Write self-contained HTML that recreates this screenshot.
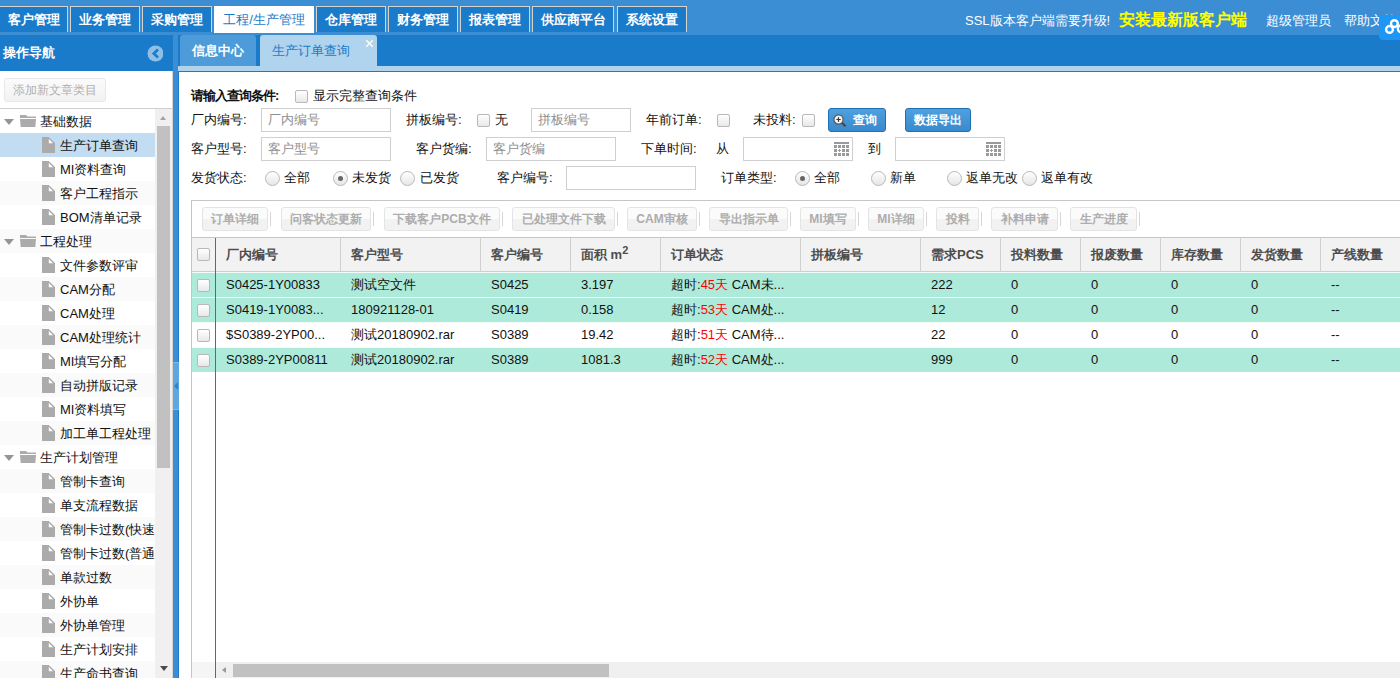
<!DOCTYPE html>
<html><head><meta charset="utf-8">
<style>
*{box-sizing:border-box;}
html,body{margin:0;padding:0;}
body{width:1400px;height:678px;overflow:hidden;position:relative;background:#fff;font-family:"Liberation Sans",sans-serif;font-size:13px;color:#111;}
.a{position:absolute;}
.t{position:absolute;white-space:nowrap;line-height:16px;}
/* header */
#hdr{left:0;top:0;width:1400px;height:35px;background:#3b8ed3;}
.mt{position:absolute;top:6px;height:26px;border:1px solid #d6d2cc;border-bottom:none;background:#1a7bca;color:#fff;font-weight:bold;font-size:13px;line-height:26px;text-align:center;white-space:nowrap;}
.mt.on{background:#fff;color:#1a7bca;font-weight:normal;height:27px;border-color:#fff;}
/* sidebar */
#side{left:0;top:35px;width:173px;height:643px;background:#fff;}
#sh{left:0;top:0;width:173px;height:36px;background:#1a7bca;}
.tr{position:absolute;left:0;width:155px;height:24px;line-height:24px;white-space:nowrap;overflow:hidden;color:#111;}
.tr.g{background:#fafafa;}
.tr.sel{background:#c2dcf2;}
.fi{position:absolute;left:42px;top:4px;width:13px;height:16px;}
.fo{position:absolute;left:20px;top:6px;width:16px;height:12px;}
.ar{position:absolute;left:3.5px;top:10px;width:0;height:0;border-left:5px solid transparent;border-right:5px solid transparent;border-top:6.5px solid #959595;}
/* content */
.cb{position:absolute;width:13px;height:13px;border:1px solid #b8b8b8;border-radius:2px;background:linear-gradient(#fff,#e8e8e8);}
.rd{position:absolute;width:15px;height:15px;border:1px solid #b8b8b8;border-radius:50%;background:linear-gradient(#fff,#e6e6e6);}
.rd.on::after{content:"";position:absolute;left:4px;top:4px;width:5px;height:5px;border-radius:50%;background:#666;}
.in{position:absolute;height:24px;border:1px solid #cfcfcf;background:#fff;color:#8e8e8e;line-height:22px;padding-left:6px;white-space:nowrap;}
.tb{position:absolute;top:207px;height:24px;border:1px solid #e4e4e4;border-radius:3px;background:linear-gradient(#fbfbfb 50%,#f2f2f2 50%);color:#adadad;font-weight:bold;font-size:12px;line-height:22px;text-align:center;white-space:nowrap;}
.sp{position:absolute;top:212px;width:1px;height:14px;background:#d6d6d6;}
.hc{position:absolute;top:238px;height:33px;line-height:33px;font-weight:bold;color:#4d4d4d;white-space:nowrap;}
.cs{position:absolute;top:238px;width:1px;height:33px;background:#cfcfcf;}
.row{position:absolute;left:192px;width:1208px;height:25px;box-shadow:inset 0 1px 0 #f2fbf8;}
.row.m{background:#aeeada;}
.c{position:absolute;top:0;line-height:25px;white-space:nowrap;color:#111;}
</style></head>
<body>
<!-- HEADER -->
<div id="hdr" class="a">
  <div class="mt" style="left:-1px;width:69px;">客户管理</div>
  <div class="mt" style="left:70px;width:70px;">业务管理</div>
  <div class="mt" style="left:142px;width:70px;">采购管理</div>
  <div class="mt on" style="left:214px;width:100px;">工程/生产管理</div>
  <div class="mt" style="left:316px;width:70px;">仓库管理</div>
  <div class="mt" style="left:388px;width:70px;">财务管理</div>
  <div class="mt" style="left:460px;width:70px;">报表管理</div>
  <div class="mt" style="left:532px;width:82px;">供应商平台</div>
  <div class="mt" style="left:617px;width:70px;">系统设置</div>
  <div class="t" style="left:965px;top:13px;color:#fff;">SSL版本客户端需要升级!</div>
  <div class="t" style="left:1119px;top:11px;color:#ffff00;font-weight:bold;font-size:16px;line-height:18px;">安装最新版客户端</div>
  <div class="t" style="left:1266px;top:13px;color:#fff;">超级管理员</div>
  <div class="t" style="left:1344px;top:13px;color:#fff;">帮助文档</div>
  <div class="a" style="left:1379px;top:15px;width:30px;height:25px;border-radius:4px;background:#1e96f5;z-index:5;"><svg width="30" height="25" viewBox="0 0 30 25"><circle cx="10.5" cy="14.4" r="3.4" fill="none" stroke="#fff" stroke-width="2.4"/><circle cx="15.4" cy="8.6" r="3.4" fill="none" stroke="#fff" stroke-width="2.4"/><circle cx="22.2" cy="13.8" r="3.4" fill="none" stroke="#fff" stroke-width="2.4"/></svg></div>
</div>

<!-- SIDEBAR -->
<div id="side" class="a">
  <div id="sh" class="a">
    <div class="t" style="left:3px;top:10px;color:#fff;font-weight:bold;">操作导航</div>
    <svg class="a" style="left:147px;top:9.5px;" width="17" height="17" viewBox="0 0 17 17"><clipPath id="cp"><rect x="0" y="0" width="16" height="17"/></clipPath><circle cx="8.5" cy="8.5" r="8" fill="#8ebfe7" clip-path="url(#cp)"/><path d="M11 4.5L6.8 8.5L11 12.5" fill="none" stroke="#1a7bca" stroke-width="2.6"/></svg>
  </div>
  <div class="a" style="left:4px;top:43px;width:102px;height:24px;border:1px solid #e8e8e8;border-radius:3px;background:linear-gradient(#fbfbfb,#f2f2f2);color:#b0b0b0;font-size:12px;line-height:22px;text-align:center;">添加新文章类目</div>
  <div class="a" style="left:0;top:73px;width:173px;height:1px;background:#cfcfcf;"></div>
  <div id="tree" class="a" style="left:0;top:74px;width:155px;height:569px;overflow:hidden;"><div class="tr" style="top:0px;"><div class="ar"></div><svg class="fo" viewBox="0 0 16 12"><path d="M0 0H6L7.5 1.5H16V3H0Z" fill="#ababab"/><path d="M0 4H16L15.3 12H0.7Z" fill="#ababab"/></svg><span class="t" style="left:40px;top:5px;">基础数据</span></div>
<div class="tr sel" style="top:24px;"><svg class="fi" viewBox="0 0 13 16"><path d="M0 0H6.7L13 6V16H0Z" fill="#ababab"/><path d="M6.8 1.8V6.2H11Z" fill="#fff"/></svg><span class="t" style="left:60px;top:5px;">生产订单查询</span></div>
<div class="tr" style="top:48px;"><svg class="fi" viewBox="0 0 13 16"><path d="M0 0H6.7L13 6V16H0Z" fill="#ababab"/><path d="M6.8 1.8V6.2H11Z" fill="#fff"/></svg><span class="t" style="left:60px;top:5px;">MI资料查询</span></div>
<div class="tr g" style="top:72px;"><svg class="fi" viewBox="0 0 13 16"><path d="M0 0H6.7L13 6V16H0Z" fill="#ababab"/><path d="M6.8 1.8V6.2H11Z" fill="#fff"/></svg><span class="t" style="left:60px;top:5px;">客户工程指示</span></div>
<div class="tr" style="top:96px;"><svg class="fi" viewBox="0 0 13 16"><path d="M0 0H6.7L13 6V16H0Z" fill="#ababab"/><path d="M6.8 1.8V6.2H11Z" fill="#fff"/></svg><span class="t" style="left:60px;top:5px;">BOM清单记录</span></div>
<div class="tr g" style="top:120px;"><div class="ar"></div><svg class="fo" viewBox="0 0 16 12"><path d="M0 0H6L7.5 1.5H16V3H0Z" fill="#ababab"/><path d="M0 4H16L15.3 12H0.7Z" fill="#ababab"/></svg><span class="t" style="left:40px;top:5px;">工程处理</span></div>
<div class="tr" style="top:144px;"><svg class="fi" viewBox="0 0 13 16"><path d="M0 0H6.7L13 6V16H0Z" fill="#ababab"/><path d="M6.8 1.8V6.2H11Z" fill="#fff"/></svg><span class="t" style="left:60px;top:5px;">文件参数评审</span></div>
<div class="tr g" style="top:168px;"><svg class="fi" viewBox="0 0 13 16"><path d="M0 0H6.7L13 6V16H0Z" fill="#ababab"/><path d="M6.8 1.8V6.2H11Z" fill="#fff"/></svg><span class="t" style="left:60px;top:5px;">CAM分配</span></div>
<div class="tr" style="top:192px;"><svg class="fi" viewBox="0 0 13 16"><path d="M0 0H6.7L13 6V16H0Z" fill="#ababab"/><path d="M6.8 1.8V6.2H11Z" fill="#fff"/></svg><span class="t" style="left:60px;top:5px;">CAM处理</span></div>
<div class="tr g" style="top:216px;"><svg class="fi" viewBox="0 0 13 16"><path d="M0 0H6.7L13 6V16H0Z" fill="#ababab"/><path d="M6.8 1.8V6.2H11Z" fill="#fff"/></svg><span class="t" style="left:60px;top:5px;">CAM处理统计</span></div>
<div class="tr" style="top:240px;"><svg class="fi" viewBox="0 0 13 16"><path d="M0 0H6.7L13 6V16H0Z" fill="#ababab"/><path d="M6.8 1.8V6.2H11Z" fill="#fff"/></svg><span class="t" style="left:60px;top:5px;">MI填写分配</span></div>
<div class="tr g" style="top:264px;"><svg class="fi" viewBox="0 0 13 16"><path d="M0 0H6.7L13 6V16H0Z" fill="#ababab"/><path d="M6.8 1.8V6.2H11Z" fill="#fff"/></svg><span class="t" style="left:60px;top:5px;">自动拼版记录</span></div>
<div class="tr" style="top:288px;"><svg class="fi" viewBox="0 0 13 16"><path d="M0 0H6.7L13 6V16H0Z" fill="#ababab"/><path d="M6.8 1.8V6.2H11Z" fill="#fff"/></svg><span class="t" style="left:60px;top:5px;">MI资料填写</span></div>
<div class="tr g" style="top:312px;"><svg class="fi" viewBox="0 0 13 16"><path d="M0 0H6.7L13 6V16H0Z" fill="#ababab"/><path d="M6.8 1.8V6.2H11Z" fill="#fff"/></svg><span class="t" style="left:60px;top:5px;">加工单工程处理</span></div>
<div class="tr" style="top:336px;"><div class="ar"></div><svg class="fo" viewBox="0 0 16 12"><path d="M0 0H6L7.5 1.5H16V3H0Z" fill="#ababab"/><path d="M0 4H16L15.3 12H0.7Z" fill="#ababab"/></svg><span class="t" style="left:40px;top:5px;">生产计划管理</span></div>
<div class="tr g" style="top:360px;"><svg class="fi" viewBox="0 0 13 16"><path d="M0 0H6.7L13 6V16H0Z" fill="#ababab"/><path d="M6.8 1.8V6.2H11Z" fill="#fff"/></svg><span class="t" style="left:60px;top:5px;">管制卡查询</span></div>
<div class="tr" style="top:384px;"><svg class="fi" viewBox="0 0 13 16"><path d="M0 0H6.7L13 6V16H0Z" fill="#ababab"/><path d="M6.8 1.8V6.2H11Z" fill="#fff"/></svg><span class="t" style="left:60px;top:5px;">单支流程数据</span></div>
<div class="tr g" style="top:408px;"><svg class="fi" viewBox="0 0 13 16"><path d="M0 0H6.7L13 6V16H0Z" fill="#ababab"/><path d="M6.8 1.8V6.2H11Z" fill="#fff"/></svg><span class="t" style="left:60px;top:5px;">管制卡过数(快速</span></div>
<div class="tr" style="top:432px;"><svg class="fi" viewBox="0 0 13 16"><path d="M0 0H6.7L13 6V16H0Z" fill="#ababab"/><path d="M6.8 1.8V6.2H11Z" fill="#fff"/></svg><span class="t" style="left:60px;top:5px;">管制卡过数(普通</span></div>
<div class="tr g" style="top:456px;"><svg class="fi" viewBox="0 0 13 16"><path d="M0 0H6.7L13 6V16H0Z" fill="#ababab"/><path d="M6.8 1.8V6.2H11Z" fill="#fff"/></svg><span class="t" style="left:60px;top:5px;">单款过数</span></div>
<div class="tr" style="top:480px;"><svg class="fi" viewBox="0 0 13 16"><path d="M0 0H6.7L13 6V16H0Z" fill="#ababab"/><path d="M6.8 1.8V6.2H11Z" fill="#fff"/></svg><span class="t" style="left:60px;top:5px;">外协单</span></div>
<div class="tr g" style="top:504px;"><svg class="fi" viewBox="0 0 13 16"><path d="M0 0H6.7L13 6V16H0Z" fill="#ababab"/><path d="M6.8 1.8V6.2H11Z" fill="#fff"/></svg><span class="t" style="left:60px;top:5px;">外协单管理</span></div>
<div class="tr" style="top:528px;"><svg class="fi" viewBox="0 0 13 16"><path d="M0 0H6.7L13 6V16H0Z" fill="#ababab"/><path d="M6.8 1.8V6.2H11Z" fill="#fff"/></svg><span class="t" style="left:60px;top:5px;">生产计划安排</span></div>
<div class="tr g" style="top:552px;"><svg class="fi" viewBox="0 0 13 16"><path d="M0 0H6.7L13 6V16H0Z" fill="#ababab"/><path d="M6.8 1.8V6.2H11Z" fill="#fff"/></svg><span class="t" style="left:60px;top:5px;">生产命书查询</span></div></div>
  <div class="a" style="left:155px;top:74px;width:17px;height:569px;background:#f0f0f0;"></div>
  <div class="a" style="left:157px;top:91px;width:13px;height:342px;background:#c1c1c1;"></div><div class="a" style="left:160px;top:81px;width:0;height:0;border-left:3.5px solid transparent;border-right:3.5px solid transparent;border-bottom:4px solid #a3a3a3;"></div><div class="a" style="left:159.5px;top:631px;width:0;height:0;border-left:4px solid transparent;border-right:4px solid transparent;border-top:5px solid #4a4a4a;"></div>
  <div class="a" style="left:172px;top:36px;width:1px;height:607px;background:#d8d4cf;"></div>
</div>

<!-- SPLITTER -->
<div class="a" style="left:173px;top:35px;width:5px;height:643px;background:#3b8ed3;"></div>
<div class="a" style="left:173px;top:362px;width:6px;height:48px;background:#5ea6e0;border-top:1px solid #7db8e8;border-bottom:1px solid #7db8e8;z-index:3;"><div class="a" style="left:1px;top:19px;width:0;height:0;border-top:4px solid transparent;border-bottom:4px solid transparent;border-right:4px solid #2a85cf;"></div></div>

<!-- RIGHT PANEL -->
<div class="a" style="left:178px;top:35px;width:1222px;height:37px;background:#1a7bca;"></div>
<div class="a" style="left:178px;top:72px;width:1px;height:606px;background:#1a7bca;"></div>
<div class="a" style="left:180px;top:35px;width:76px;height:31px;background:#4d9bd8;border-radius:3px 3px 0 0;"></div>
<div class="t" style="left:192px;top:43px;color:#fff;font-weight:bold;">信息中心</div>
<div class="a" style="left:260px;top:35px;width:117px;height:31px;background:#b0d3ee;border-radius:3px 3px 0 0;"></div>
<div class="a" style="left:178px;top:66px;width:1222px;height:5px;background:#b0d3ee;"></div>
<div class="t" style="left:272px;top:43px;color:#1a7bca;">生产订单查询</div>
<svg class="a" style="left:365px;top:39px;" width="9" height="9" viewBox="0 0 9 9"><path d="M1.2 1.2L7.8 7.8M7.8 1.2L1.2 7.8" stroke="#fff" stroke-width="1.3"/></svg>

<!-- FORM -->
<div class="t" style="left:191px;top:88px;font-weight:bold;letter-spacing:-1px;">请输入查询条件:</div>
<div class="cb" style="left:295px;top:90px;"></div>
<div class="t" style="left:313px;top:88px;">显示完整查询条件</div>
<div class="t" style="left:191px;top:112px;">厂内编号:</div>
<div class="in" style="left:261px;top:108px;width:130px;">厂内编号</div>
<div class="t" style="left:406px;top:112px;">拼板编号:</div>
<div class="cb" style="left:477px;top:114px;"></div>
<div class="t" style="left:495px;top:112px;">无</div>
<div class="in" style="left:531px;top:108px;width:100px;">拼板编号</div>
<div class="t" style="left:646px;top:112px;">年前订单:</div>
<div class="cb" style="left:717px;top:114px;"></div>
<div class="t" style="left:753px;top:112px;">未投料:</div>
<div class="cb" style="left:802px;top:114px;"></div>
<div class="a" style="left:828px;top:108px;width:58px;height:24px;border:1px solid #2170b3;border-radius:3px;background:linear-gradient(#4fa0dd,#378ace);"></div>
<svg class="a" style="left:833px;top:114px;" width="15" height="13" viewBox="0 0 15 13"><circle cx="5.5" cy="5.5" r="4.6" fill="#f4f4f4" stroke="#555" stroke-width="1.2"/><path d="M3.3 5.5H7.7M5.5 3.3V7.7" stroke="#333" stroke-width="1.2"/><path d="M8.8 8.8L12.5 12.3" stroke="#444" stroke-width="2"/></svg>
<div class="t" style="left:853px;top:112px;color:#fff;font-weight:bold;font-size:12px;">查询</div>
<div class="a" style="left:905px;top:108px;width:66px;height:24px;border:1px solid #2170b3;border-radius:3px;background:linear-gradient(#4fa0dd,#378ace);"></div>
<div class="t" style="left:914px;top:112px;color:#fff;font-weight:bold;font-size:12px;">数据导出</div>
<div class="t" style="left:191px;top:141px;">客户型号:</div>
<div class="in" style="left:261px;top:137px;width:130px;">客户型号</div>
<div class="t" style="left:416px;top:141px;">客户货编:</div>
<div class="in" style="left:486px;top:137px;width:130px;">客户货编</div>
<div class="t" style="left:641px;top:141px;">下单时间:</div>
<div class="t" style="left:716px;top:141px;">从</div>
<div class="in" style="left:743px;top:137px;width:110px;"></div>
<svg class="a" style="left:834px;top:142px;" width="15" height="14" viewBox="0 0 15 14"><rect x="0" y="0" width="15" height="2" fill="#9a9a9a"/><rect x="0" y="3" width="3" height="3" fill="#9a9a9a"/><rect x="4" y="3" width="3" height="3" fill="#9a9a9a"/><rect x="8" y="3" width="3" height="3" fill="#9a9a9a"/><rect x="12" y="3" width="3" height="3" fill="#9a9a9a"/><rect x="0" y="7" width="3" height="3" fill="#9a9a9a"/><rect x="8" y="7" width="3" height="3" fill="#9a9a9a"/><rect x="12" y="7" width="3" height="3" fill="#9a9a9a"/><rect x="0" y="11" width="3" height="3" fill="#9a9a9a"/><rect x="4" y="11" width="3" height="3" fill="#9a9a9a"/><rect x="8" y="11" width="3" height="3" fill="#9a9a9a"/><rect x="12" y="11" width="3" height="3" fill="#9a9a9a"/><path d="M4 8.5H7M5.5 7V10" stroke="#9a9a9a" stroke-width="1"/></svg>
<div class="t" style="left:868px;top:141px;">到</div>
<div class="in" style="left:895px;top:137px;width:110px;"></div>
<svg class="a" style="left:986px;top:142px;" width="15" height="14" viewBox="0 0 15 14"><rect x="0" y="0" width="15" height="2" fill="#9a9a9a"/><rect x="0" y="3" width="3" height="3" fill="#9a9a9a"/><rect x="4" y="3" width="3" height="3" fill="#9a9a9a"/><rect x="8" y="3" width="3" height="3" fill="#9a9a9a"/><rect x="12" y="3" width="3" height="3" fill="#9a9a9a"/><rect x="0" y="7" width="3" height="3" fill="#9a9a9a"/><rect x="8" y="7" width="3" height="3" fill="#9a9a9a"/><rect x="12" y="7" width="3" height="3" fill="#9a9a9a"/><rect x="0" y="11" width="3" height="3" fill="#9a9a9a"/><rect x="4" y="11" width="3" height="3" fill="#9a9a9a"/><rect x="8" y="11" width="3" height="3" fill="#9a9a9a"/><rect x="12" y="11" width="3" height="3" fill="#9a9a9a"/><path d="M4 8.5H7M5.5 7V10" stroke="#9a9a9a" stroke-width="1"/></svg>
<div class="t" style="left:191px;top:170px;">发货状态:</div>
<div class="rd" style="left:265px;top:171px;"></div>
<div class="t" style="left:284px;top:170px;">全部</div>
<div class="rd on" style="left:333px;top:171px;"></div>
<div class="t" style="left:352px;top:170px;">未发货</div>
<div class="rd" style="left:400px;top:171px;"></div>
<div class="t" style="left:420px;top:170px;">已发货</div>
<div class="t" style="left:497px;top:170px;">客户编号:</div>
<div class="in" style="left:566px;top:166px;width:130px;"></div>
<div class="t" style="left:721px;top:170px;">订单类型:</div>
<div class="rd on" style="left:795px;top:171px;"></div>
<div class="t" style="left:814px;top:170px;">全部</div>
<div class="rd" style="left:871px;top:171px;"></div>
<div class="t" style="left:890px;top:170px;">新单</div>
<div class="rd" style="left:947px;top:171px;"></div>
<div class="t" style="left:966px;top:170px;">返单无改</div>
<div class="rd" style="left:1022px;top:171px;"></div>
<div class="t" style="left:1041px;top:170px;">返单有改</div>

<!-- GRID -->
<div class="a" style="left:191px;top:200px;width:1209px;height:478px;border-left:1px solid #c6c6c6;border-top:1px solid #c6c6c6;background:#fff;"></div>
<div class="a" style="left:192px;top:237px;width:1208px;height:1px;background:#c6c6c6;"></div>
<div class="tb" style="left:202px;width:66px;">订单详细</div>
<div class="sp" style="left:270px;"></div>
<div class="tb" style="left:281px;width:90px;">问客状态更新</div>
<div class="sp" style="left:373px;"></div>
<div class="tb" style="left:384px;width:116px;">下载客户PCB文件</div>
<div class="sp" style="left:502px;"></div>
<div class="tb" style="left:512px;width:103px;">已处理文件下载</div>
<div class="sp" style="left:617px;"></div>
<div class="tb" style="left:627px;width:70px;">CAM审核</div>
<div class="sp" style="left:699px;"></div>
<div class="tb" style="left:709px;width:79px;">导出指示单</div>
<div class="sp" style="left:790px;"></div>
<div class="tb" style="left:800px;width:56px;">MI填写</div>
<div class="sp" style="left:858px;"></div>
<div class="tb" style="left:868px;width:56px;">MI详细</div>
<div class="sp" style="left:926px;"></div>
<div class="tb" style="left:936px;width:43px;">投料</div>
<div class="sp" style="left:981px;"></div>
<div class="tb" style="left:991px;width:67px;">补料申请</div>
<div class="sp" style="left:1060px;"></div>
<div class="tb" style="left:1070px;width:67px;">生产进度</div>
<div class="sp" style="left:1139px;"></div>
<div class="a" style="left:192px;top:238px;width:1208px;height:33px;background:#f2f2f2;"></div>
<div class="a" style="left:192px;top:271px;width:1208px;height:1px;background:#cfcfcf;"></div>
<div class="cb" style="left:197px;top:248px;"></div>
<div class="hc" style="left:226px;">厂内编号</div>
<div class="cs" style="left:340px;"></div>
<div class="hc" style="left:351px;">客户型号</div>
<div class="cs" style="left:480px;"></div>
<div class="hc" style="left:491px;">客户编号</div>
<div class="cs" style="left:570px;"></div>
<div class="hc" style="left:581px;">面积 m<sup style="font-size:11px;line-height:0;">2</sup></div>
<div class="cs" style="left:660px;"></div>
<div class="hc" style="left:671px;">订单状态</div>
<div class="cs" style="left:800px;"></div>
<div class="hc" style="left:811px;">拼板编号</div>
<div class="cs" style="left:920px;"></div>
<div class="hc" style="left:931px;">需求PCS</div>
<div class="cs" style="left:1000px;"></div>
<div class="hc" style="left:1011px;">投料数量</div>
<div class="cs" style="left:1080px;"></div>
<div class="hc" style="left:1091px;">报废数量</div>
<div class="cs" style="left:1160px;"></div>
<div class="hc" style="left:1171px;">库存数量</div>
<div class="cs" style="left:1240px;"></div>
<div class="hc" style="left:1251px;">发货数量</div>
<div class="cs" style="left:1320px;"></div>
<div class="hc" style="left:1331px;">产线数量</div>
<div class="row m" style="top:272px;"><div class="cb" style="left:5px;top:7px;"></div><div class="c" style="left:34px;">S0425-1Y00833</div><div class="c" style="left:159px;">测试空文件</div><div class="c" style="left:299px;">S0425</div><div class="c" style="left:389px;">3.197</div><div class="c" style="left:479px;">超时:<span style="color:#f00">45天</span> CAM未...</div><div class="c" style="left:619px;"></div><div class="c" style="left:739px;">222</div><div class="c" style="left:819px;">0</div><div class="c" style="left:899px;">0</div><div class="c" style="left:979px;">0</div><div class="c" style="left:1059px;">0</div><div class="c" style="left:1139px;">--</div></div>
<div class="row m" style="top:297px;"><div class="cb" style="left:5px;top:7px;"></div><div class="c" style="left:34px;">S0419-1Y0083...</div><div class="c" style="left:159px;">180921128-01</div><div class="c" style="left:299px;">S0419</div><div class="c" style="left:389px;">0.158</div><div class="c" style="left:479px;">超时:<span style="color:#f00">53天</span> CAM处...</div><div class="c" style="left:619px;"></div><div class="c" style="left:739px;">12</div><div class="c" style="left:819px;">0</div><div class="c" style="left:899px;">0</div><div class="c" style="left:979px;">0</div><div class="c" style="left:1059px;">0</div><div class="c" style="left:1139px;">--</div></div>
<div class="row" style="top:322px;"><div class="cb" style="left:5px;top:7px;"></div><div class="c" style="left:34px;">$S0389-2YP00...</div><div class="c" style="left:159px;">测试20180902.rar</div><div class="c" style="left:299px;">S0389</div><div class="c" style="left:389px;">19.42</div><div class="c" style="left:479px;">超时:<span style="color:#f00">51天</span> CAM待...</div><div class="c" style="left:619px;"></div><div class="c" style="left:739px;">22</div><div class="c" style="left:819px;">0</div><div class="c" style="left:899px;">0</div><div class="c" style="left:979px;">0</div><div class="c" style="left:1059px;">0</div><div class="c" style="left:1139px;">--</div></div>
<div class="row m" style="top:347px;"><div class="cb" style="left:5px;top:7px;"></div><div class="c" style="left:34px;">S0389-2YP00811</div><div class="c" style="left:159px;">测试20180902.rar</div><div class="c" style="left:299px;">S0389</div><div class="c" style="left:389px;">1081.3</div><div class="c" style="left:479px;">超时:<span style="color:#f00">52天</span> CAM处...</div><div class="c" style="left:619px;"></div><div class="c" style="left:739px;">999</div><div class="c" style="left:819px;">0</div><div class="c" style="left:899px;">0</div><div class="c" style="left:979px;">0</div><div class="c" style="left:1059px;">0</div><div class="c" style="left:1139px;">--</div></div>
<div class="a" style="left:215px;top:238px;width:1px;height:440px;background:#1a7bca;"></div>
<div class="a" style="left:192px;top:662px;width:1208px;height:16px;background:#f0f0f0;"></div>
<div class="a" style="left:192px;top:662px;width:23px;height:16px;background:#f5f5f5;"></div>
<div class="a" style="left:215px;top:662px;width:1px;height:16px;background:#1a7bca;"></div>
<div class="a" style="left:222px;top:667px;width:0;height:0;border-top:3.5px solid transparent;border-bottom:3.5px solid transparent;border-right:4.5px solid #9a9a9a;"></div>
<div class="a" style="left:233px;top:664px;width:376px;height:13px;background:#c1c1c1;"></div>
</body></html>
